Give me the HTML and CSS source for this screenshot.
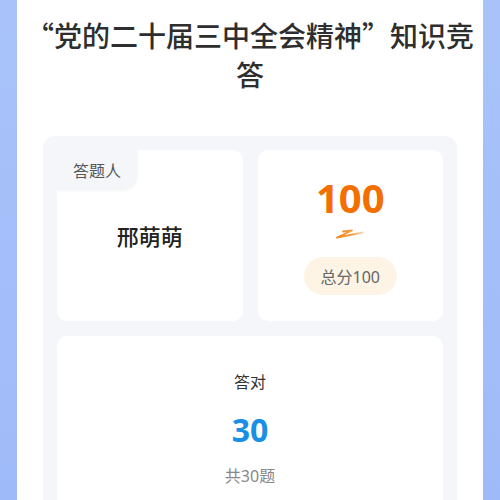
FILE: index.html
```html
<!DOCTYPE html>
<html lang="zh-CN">
<head>
<meta charset="utf-8">
<title>知识竞答</title>
<link rel="stylesheet" href="styles.css">
</head>
<body>
<div class="page">
  <h1 class="title">“党的二十届三中全会精神”知识竞答</h1>
  <div class="panel">
    <div class="card card-person">
      <div class="tab">答题人</div>
      <div class="name">邢萌萌</div>
    </div>
    <div class="card card-score">
      <div class="score">100</div>
      <svg class="squiggle" width="30" height="12" viewBox="0 0 30 12">
        <defs>
          <linearGradient id="sq" x1="0" y1="0" x2="1" y2="0">
            <stop offset="0" stop-color="#f08a1c"/>
            <stop offset="0.6" stop-color="#f3a04a"/>
            <stop offset="1" stop-color="#f6c28a" stop-opacity="0.6"/>
          </linearGradient>
        </defs>
        <path d="M8 3.5 L17 2.5 L2 9.5 L28 4.5" fill="none" stroke="url(#sq)" stroke-width="1.8" stroke-linecap="round" stroke-linejoin="round"/>
      </svg>
      <div class="pill">总分100</div>
    </div>
    <div class="card card-wide">
      <div class="label">答对</div>
      <div class="correct">30</div>
      <div class="total">共30题</div>
    </div>
  </div>
</div>
</body>
</html>
```

FILE: styles.css
```css
html, body {
  margin: 0;
  padding: 0;
}
body {
  background: linear-gradient(180deg, #a9c3fa 0%, #9fbaf8 100%);
  font-family: "Noto Sans", "Noto Sans CJK SC", sans-serif;
  overflow: hidden;
  height: 500px;
}
.page {
  margin: 0 17px;
  background: #ffffff;
  height: 500px;
  padding-top: 16px;
  box-sizing: border-box;
  overflow: hidden;
}
.title {
  margin: 0;
  padding: 0 8px;
  font-family: "Noto Sans CJK SC", sans-serif;
  font-size: 28px;
  line-height: 39px;
  font-weight: 500;
  text-align: center;
  color: #2e2e2e;
}
.panel {
  margin: 42px 26px 0;
  padding: 14px 14px 0;
  background: #f4f6fa;
  border-radius: 12px 12px 0 0;
  display: grid;
  grid-template-columns: 1fr 1fr;
  gap: 15px;
}
.card {
  background: #ffffff;
  border-radius: 10px;
}
.card-person {
  height: 171px;
  display: flex;
  flex-direction: column;
}
.tab {
  align-self: flex-start;
  width: 80px;
  height: 40px;
  display: flex;
  align-items: center;
  justify-content: center;
  background: #f4f6f9;
  border-radius: 10px 0 16px 0;
  box-shadow: 1px 1px 3px rgba(0, 0, 0, 0.04);
  font-size: 16px;
  color: #555555;
}
.name {
  margin-top: 31px;
  font-size: 22px;
  line-height: 30px;
  font-weight: 500;
  text-align: center;
  color: #222222;
}
.card-score {
  height: 171px;
  display: flex;
  flex-direction: column;
  align-items: center;
}
.score {
  margin-top: 28px;
  font-size: 40px;
  line-height: 40px;
  font-weight: 700;
  color: #f26f00;
}
.squiggle {
  display: block;
  margin-top: 10px;
}
.pill {
  margin-top: 17px;
  height: 38px;
  padding: 0 17px;
  border-radius: 19px;
  background: #fdf4e6;
  display: flex;
  align-items: center;
  font-size: 16px;
  color: #666666;
}
.card-wide {
  grid-column: 1 / -1;
  height: 164px;
  display: flex;
  flex-direction: column;
  align-items: center;
  padding-top: 34px;
  box-sizing: border-box;
  border-radius: 10px 10px 0 0;
}
.label {
  font-size: 16px;
  line-height: 24px;
  color: #333333;
}
.correct {
  margin-top: 20px;
  font-size: 32px;
  line-height: 32px;
  font-weight: 700;
  color: #1a8fe6;
}
.total {
  margin-top: 18px;
  font-size: 16px;
  line-height: 24px;
  color: #888888;
}
```
